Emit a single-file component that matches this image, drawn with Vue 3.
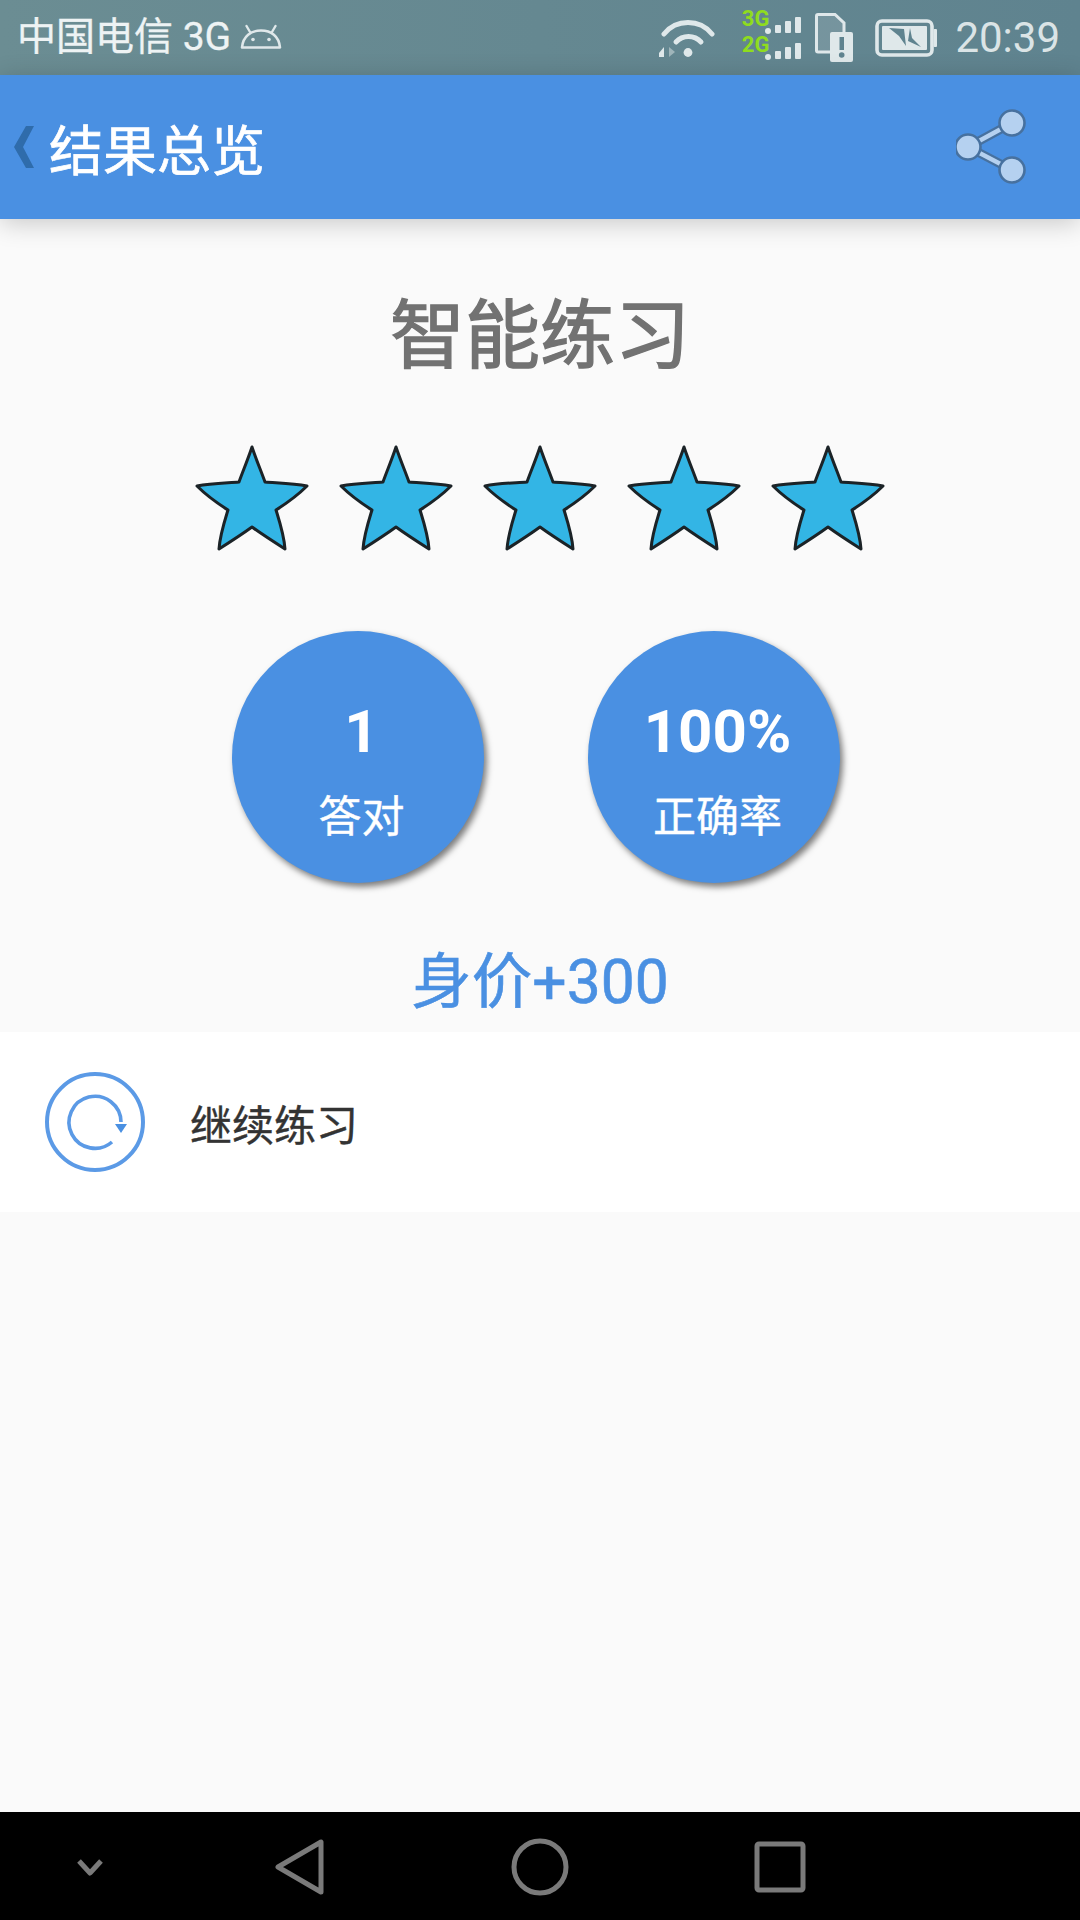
<template>
  <div class="screen">
    <div class="status-bar">
      <span class="carrier">中国电信 3G</span>
      <svg class="android" width="42" height="26" viewBox="0 0 42 26">
        <path d="M2 23.5 C3 12 11 6.5 21 6.5 C31 6.5 39 12 40 23.5 Z" fill="none" stroke="#dfe8ea" stroke-width="2.6" stroke-linejoin="round" />
        <path d="M10 8 L6.5 2 M32 8 L35.5 2" stroke="#dfe8ea" stroke-width="2.4" stroke-linecap="round" />
        <circle cx="13" cy="15.5" r="1.8" fill="#dfe8ea" />
        <circle cx="29" cy="15.5" r="1.8" fill="#dfe8ea" />
      </svg>
      <div class="spacer"></div>
      <svg class="wifi" width="56" height="40" viewBox="0 0 56 40">
        <path d="M5 15 A31 31 0 0 1 53 15" fill="none" stroke="#dfe8ea" stroke-width="5" stroke-linecap="round" />
        <path d="M17 23 A17 17 0 0 1 42 23" fill="none" stroke="#dfe8ea" stroke-width="5" stroke-linecap="round" />
        <circle cx="29" cy="33.5" r="4.4" fill="#dfe8ea" />
        <path d="M0 34 L5 28 V38 H0 Z" fill="#dfe8ea" />
        <path d="M10 28 V38 L16 33 Z" fill="#9fb5ba" />
      </svg>
      <div class="net-labels">
        <span>3G</span>
        <span>2G</span>
      </div>
      <svg class="signal" width="36" height="54" viewBox="0 0 36 54">
        <g fill="#dfe8ea">
          <circle cx="3" cy="24" r="3" />
          <rect x="10" y="18" width="6" height="8" rx="1" />
          <rect x="20" y="14" width="6" height="12" rx="1" />
          <rect x="30" y="10" width="6" height="16" rx="1" />
          <circle cx="3" cy="50" r="3" />
          <rect x="10" y="44" width="6" height="8" rx="1" />
          <rect x="20" y="40" width="6" height="12" rx="1" />
          <rect x="30" y="36" width="6" height="16" rx="1" />
        </g>
      </svg>
      <svg class="sim" width="38" height="50" viewBox="0 0 38 50">
        <path d="M3 1.5 H20 L29 10 V39 H3 Q1.5 39 1.5 37.5 V3 Q1.5 1.5 3 1.5 Z" fill="none" stroke="#dfe8ea" stroke-width="3" />
        <path d="M3 1.5 H20 L29 10 V20 H16 V39 H3 Z" fill="#dfe8ea" opacity="0.16" />
        <rect x="15" y="19" width="23" height="30" rx="2" fill="#dfe8ea" />
        <rect x="24.5" y="24" width="4.5" height="13" fill="#5f838f" />
        <circle cx="26.7" cy="42" r="2.8" fill="#5f838f" />
      </svg>
      <svg class="battery" width="62" height="38" viewBox="0 0 62 38">
        <rect x="2" y="2" width="55" height="34" rx="5" fill="none" stroke="#dfe8ea" stroke-width="3.6" />
        <rect x="58.5" y="10" width="3.5" height="18" rx="1" fill="#dfe8ea" />
        <rect x="7" y="7" width="45" height="24" rx="1" fill="#dfe8ea" />
        <path d="M14 9 L29 10 L31 27 L24 17 Z M35 9 L37 19 L46 28 L33 22 Z" fill="#5f838f" />
      </svg>
      <span class="clock">20:39</span>
    </div>

    <header class="app-bar">
      <svg class="back" width="22" height="44" viewBox="0 0 22 44">
        <path d="M21 1 H13 L1 22 L13 43 H21 L10 22 Z" fill="#2f6cab" />
      </svg>
      <h1>结果总览</h1>
      <div class="spacer"></div>
      <svg class="share" width="76" height="80" viewBox="0 0 76 80">
        <path d="M56 16 L12 40 L56 63" fill="none" stroke="#47719f" stroke-width="9" />
        <path d="M56 16 L12 40 L56 63" fill="none" stroke="#b5d1f0" stroke-width="4.5" />
        <circle cx="56" cy="16" r="12.5" fill="#b5d1f0" stroke="#47719f" stroke-width="2.6" />
        <circle cx="12" cy="40" r="12.5" fill="#b5d1f0" stroke="#47719f" stroke-width="2.6" />
        <circle cx="56" cy="63" r="12.5" fill="#b5d1f0" stroke="#47719f" stroke-width="2.6" />
      </svg>
    </header>

    <main class="content">
      <h2 class="title">智能练习</h2>
      <div class="stars">
        <svg v-for="n in 5" :key="n" width="114" height="106" viewBox="0 0 114 106">
          <path
            d="M57 2 C61 14 66 26 70 37 C82 38 98 38 112 41 C103 50 92 58 81 65 C85 78 89 90 90 104 C79 97 68 90 57 82 C46 90 35 97 24 104 C25 90 29 78 33 65 C22 58 11 50 2 41 C16 38 32 38 44 37 C48 26 53 14 57 2 Z"
            fill="#33b5e5"
            stroke="#1b2327"
            stroke-width="3"
            stroke-linejoin="round"
          />
        </svg>
      </div>
      <div class="stats">
        <div v-for="s in stats" :key="s.label" class="stat">
          <div class="stat-value">{{ s.value }}</div>
          <div class="stat-label">{{ s.label }}</div>
        </div>
      </div>
      <div class="reward">身价+300</div>
      <div class="action">
        <svg width="100" height="100" viewBox="0 0 100 100">
          <circle cx="50" cy="50" r="48" fill="none" stroke="#5b9ae6" stroke-width="4" />
          <path d="M67 70 A26 26 0 1 1 76 50" fill="none" stroke="#5b9ae6" stroke-width="3.6" />
          <path d="M70 52 H82 L76 61 Z" fill="#4a90e2" />
        </svg>
        <span>继续练习</span>
      </div>
    </main>

    <nav class="nav-bar">
      <svg width="28" height="18" viewBox="0 0 28 18">
        <path d="M3 3 L14 15 L25 3" fill="none" stroke="#7a7a7a" stroke-width="5" stroke-linejoin="round" />
      </svg>
      <svg width="50" height="56" viewBox="0 0 50 56">
        <path d="M46 3 V53 L3 28 Z" fill="none" stroke="#7a7a7a" stroke-width="5" stroke-linejoin="round" />
      </svg>
      <svg width="58" height="58" viewBox="0 0 58 58">
        <circle cx="29" cy="29" r="26" fill="none" stroke="#7a7a7a" stroke-width="5" />
      </svg>
      <svg width="52" height="52" viewBox="0 0 52 52">
        <rect x="3" y="3" width="46" height="46" rx="2" fill="none" stroke="#7a7a7a" stroke-width="5" />
      </svg>
    </nav>
  </div>
</template>

<script setup>
const stats = [
  { value: "1", label: "答对" },
  { value: "100%", label: "正确率" },
];
</script>

<style>
body {
  background: #fafafa;
}
</style>

<style scoped>
.screen {
  display: flex;
  flex-direction: column;
  width: 1080px;
  height: 1920px;
  overflow: hidden;
  background: #fafafa;
  font-family: Roboto, "Noto Sans CJK SC", sans-serif;
}

.spacer {
  flex: 1;
}

.status-bar {
  display: flex;
  align-items: center;
  flex: none;
  height: 75px;
  padding: 0 20px 0 17px;
  box-sizing: border-box;
  background: linear-gradient(90deg, #6b8d93, #5f838f);
  color: #eef3f4;
}

.carrier {
  font-size: 39px;
  line-height: 75px;
  white-space: nowrap;
  -webkit-text-stroke: 0.3px currentColor;
}

.android {
  margin: 0 0 2px 9px;
}

.wifi {
  margin-top: 2px;
}

.net-labels {
  display: flex;
  flex-direction: column;
  margin-left: 27px;
  margin-top: -12px;
  color: #8fdc1e;
  font-size: 22px;
  font-weight: 700;
  line-height: 26px;
}

.signal {
  margin: -7px 0 0 -4px;
}

.sim {
  margin: 0 0 0 14px;
}

.battery {
  margin: 0 0 0 22px;
}

.clock {
  margin-left: 18px;
  color: #dbe4e6;
  font-size: 42px;
  line-height: 75px;
}

.app-bar {
  position: relative;
  z-index: 2;
  display: flex;
  align-items: center;
  flex: none;
  height: 144px;
  padding: 0 48px 0 13px;
  box-sizing: border-box;
  background: #4a90e2;
  box-shadow: 0 4px 24px rgba(0, 0, 0, 0.2);
}

.app-bar h1 {
  margin: 0 0 0 14px;
  color: #fff;
  font-size: 54px;
  font-weight: 400;
  -webkit-text-stroke: 0.7px currentColor;
}

.content {
  flex: 1;
  display: flex;
  flex-direction: column;
  align-items: center;
}

.title {
  margin: 71px 0 0;
  color: #727272;
  font-size: 75px;
  font-weight: 400;
  line-height: 92px;
  -webkit-text-stroke: 1.4px currentColor;
}

.stars {
  display: flex;
  gap: 30px;
  margin-top: 63px;
}

.stats {
  display: flex;
  gap: 104px;
  margin: 80px 8px 0 0;
}

.stat {
  display: flex;
  flex-direction: column;
  align-items: center;
  width: 252px;
  height: 252px;
  padding-left: 7px;
  box-sizing: border-box;
  border-radius: 50%;
  background: #4a90e2;
  box-shadow: 3px 4px 6px rgba(0, 0, 0, 0.5);
  color: #fff;
}

.stat-value {
  margin-top: 61px;
  font-size: 60px;
  font-weight: 700;
  line-height: 80px;
}

.stat-label {
  margin-top: 17px;
  font-size: 43px;
  line-height: 56px;
  -webkit-text-stroke: 0.4px currentColor;
}

.reward {
  margin-top: 60px;
  color: #4a90e2;
  font-size: 60.5px;
  font-weight: 400;
  line-height: 80px;
  -webkit-text-stroke: 0.6px currentColor;
}

.action {
  display: flex;
  align-items: center;
  align-self: stretch;
  gap: 45px;
  height: 180px;
  margin-top: 9px;
  padding-left: 45px;
  background: #fff;
  color: #333;
  font-size: 42px;
  -webkit-text-stroke: 0.4px currentColor;
}

.nav-bar {
  flex: none;
  display: grid;
  grid-template-columns: 180px 240px 240px 240px;
  align-items: center;
  justify-items: center;
  height: 108px;
  padding-top: 2px;
  box-sizing: border-box;
  background: #000;
}
</style>
